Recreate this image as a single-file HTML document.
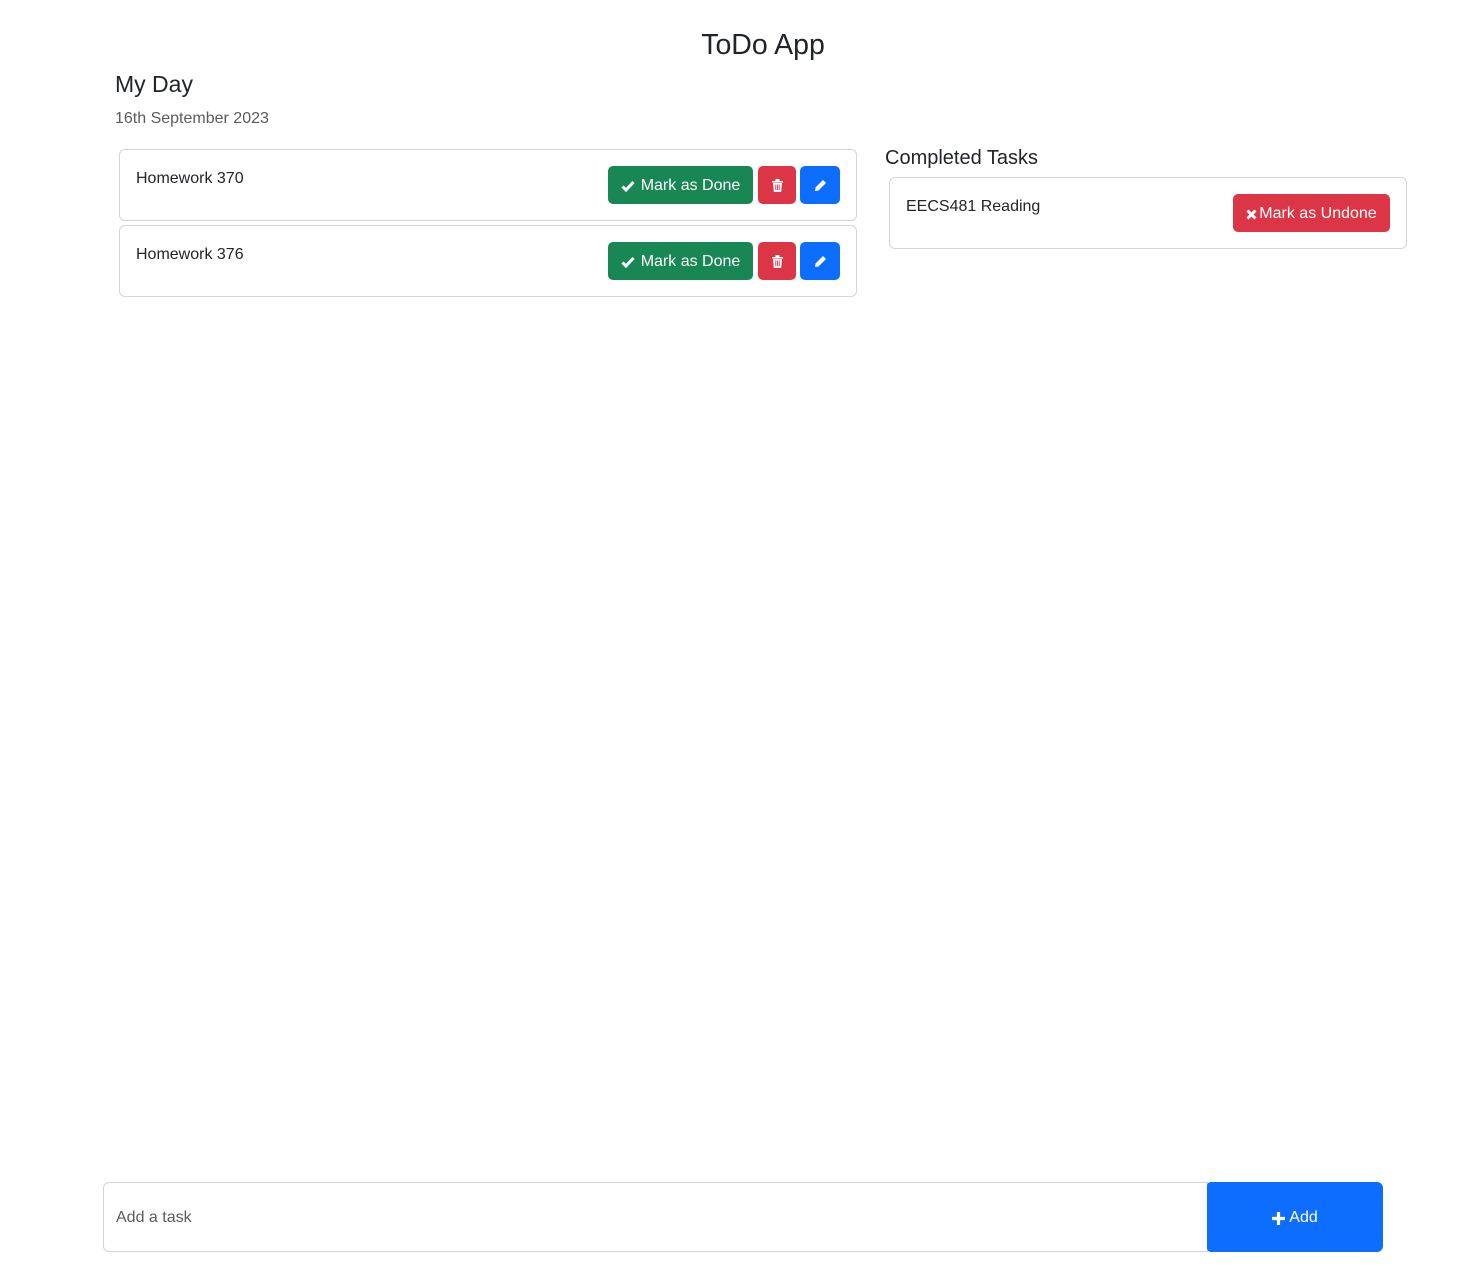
<!DOCTYPE html>
<html><head><meta charset="utf-8"><style>
*{box-sizing:border-box;margin:0;padding:0}
body{width:1473px;height:1285px;background:#fff;font-family:"Liberation Sans",sans-serif;color:#212529;position:relative;overflow:hidden}
.card{position:absolute;border:1px solid #d3d5d8;border-radius:6px;background:#fff}
.t{position:absolute;font-size:16px;white-space:nowrap}
.btn{position:absolute;border-radius:5px;color:#fff;font-size:16px;display:flex;align-items:center;justify-content:center;white-space:nowrap;padding-top:2px}
.g{background:#198754}.r{background:#dc3545}.b{background:#0d6efd}
</style></head><body>
<div class="t" style="left:0;width:1526px;text-align:center;top:29px;font-size:28.5px">ToDo App</div>
<div class="t" style="left:115px;top:71px;font-size:23px">My Day</div>
<div class="t" style="left:115px;top:110px;color:#595c5f">16th September 2023</div>

<div class="card" style="left:119px;top:149px;width:738px;height:72px"></div>
<div class="t" style="left:136px;top:170px">Homework 370</div>
<div class="btn g" style="left:608px;top:166px;width:145px;height:38px"><svg width="14" height="12" viewBox="0 0 14 12" style="margin-right:6px"><path d="M1.5 6.5 L5 10 L12.5 2" stroke="#fff" stroke-width="3" fill="none"/></svg>Mark as Done</div>
<div class="btn r" style="left:758px;top:166px;width:38px;height:38px;padding-top:0"><svg width="11" height="13" viewBox="0 0 11 13"><path d="M0 2h11v1.5H0zM3.5 0h4v2h-4zM1 4h9l-.8 9H1.8z" fill="#fff"/><path d="M3.8 5.5v5.5M5.5 5.5v5.5M7.2 5.5v5.5" stroke="#dc3545" stroke-width=".9"/></svg></div>
<div class="btn b" style="left:800px;top:166px;width:40px;height:38px;padding-top:0"><svg width="13" height="13" viewBox="0 0 13 13"><path d="M9 1l3 3-7.5 7.5-3.5.5.5-3.5z" fill="#fff"/></svg></div>

<div class="card" style="left:119px;top:225px;width:738px;height:72px"></div>
<div class="t" style="left:136px;top:246px">Homework 376</div>
<div class="btn g" style="left:608px;top:242px;width:145px;height:38px"><svg width="14" height="12" viewBox="0 0 14 12" style="margin-right:6px"><path d="M1.5 6.5 L5 10 L12.5 2" stroke="#fff" stroke-width="3" fill="none"/></svg>Mark as Done</div>
<div class="btn r" style="left:758px;top:242px;width:38px;height:38px;padding-top:0"><svg width="11" height="13" viewBox="0 0 11 13"><path d="M0 2h11v1.5H0zM3.5 0h4v2h-4zM1 4h9l-.8 9H1.8z" fill="#fff"/><path d="M3.8 5.5v5.5M5.5 5.5v5.5M7.2 5.5v5.5" stroke="#dc3545" stroke-width=".9"/></svg></div>
<div class="btn b" style="left:800px;top:242px;width:40px;height:38px;padding-top:0"><svg width="13" height="13" viewBox="0 0 13 13"><path d="M9 1l3 3-7.5 7.5-3.5.5.5-3.5z" fill="#fff"/></svg></div>

<div class="t" style="left:885px;top:147px;font-size:20px">Completed Tasks</div>
<div class="card" style="left:889px;top:177px;width:518px;height:72px"></div>
<div class="t" style="left:906px;top:198px">EECS481 Reading</div>
<div class="btn r" style="left:1233px;top:194px;width:157px;height:38px"><svg width="11" height="11" viewBox="0 0 11 11" style="margin-right:2px"><path d="M1.5 1.5l8 8M9.5 1.5l-8 8" stroke="#fff" stroke-width="3"/></svg>Mark as Undone</div>

<div class="card" style="left:103px;top:1182px;width:1105px;height:70px;border-radius:6px 0 0 6px"></div>
<div class="t" style="left:116px;top:1209px;color:#595c5f">Add a task</div>
<div class="btn b" style="left:1207px;top:1182px;width:176px;height:70px;border-radius:4px 6px 6px 4px"><svg width="13" height="13" viewBox="0 0 13 13" style="margin-right:4px"><path d="M6.5 0v13M0 6.5h13" stroke="#fff" stroke-width="3.2"/></svg>Add</div>
</body></html>
